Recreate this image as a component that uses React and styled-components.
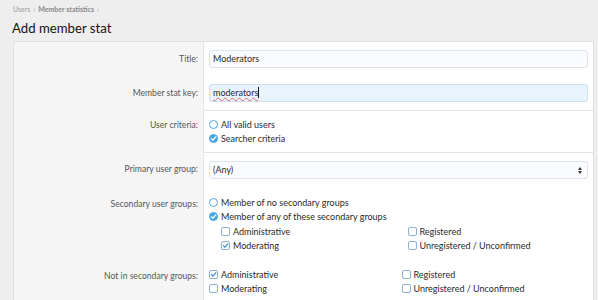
import React from 'react'
import styled, { createGlobalStyle } from 'styled-components'

const GlobalStyle = createGlobalStyle`
  html, body {
    margin: 0;
    padding: 0;
    background: #eeeeee;
    font-family: Lato, "Open Sans", sans-serif;
    color: #2a2a2a;
  }
`

const Page = styled.div`
  width: 598px;
  height: 300px;
  overflow: hidden;
  padding: 4px 4px 0 13px;
  box-sizing: border-box;
`

const Crumbs = styled.div`
  display: flex;
  align-items: center;
  gap: 3px;
  font-size: 7px;
  color: #9a9a9a;
  height: 9px;
  b {
    font-weight: 700;
    color: #8a8a8a;
  }
`

const Title = styled.h1`
  margin: 5px 0 0 -1px;
  font-size: 13.2px;
  font-weight: 400;
  color: #141414;
  line-height: 20px;
  height: 23px;
`

const Panel = styled.div`
  border: 1px solid #e0e0e0;
  border-bottom: none;
  background: #fff;
`

const Row = styled.div`
  display: grid;
  grid-template-columns: 190px 1fr;
`

const Label = styled.div`
  background: #f5f5f5;
  border-right: 1px solid #e6e6e6;
  text-align: right;
  padding: ${({pad}) => pad || '8px'} 5px 0 0;
  font-size: 8.6px;
  color: #555;
  line-height: 18px;
`

const Control = styled.div`
  padding: ${({pad}) => pad || '8px 5px'};
  border-top: ${({sep}) => sep ? '1px solid #e4e4e4' : 'none'};
`

const Input = styled.div`
  height: 18px;
  box-sizing: border-box;
  border: 1px solid ${({focus}) => focus ? '#cfdfef' : '#dde4ec'};
  border-radius: 3px;
  background: ${({focus}) => focus ? '#e9f3fd' : '#f9fbfe'};
  font-size: 9px;
  line-height: 16px;
  padding: 0 5px 0 3px;
  display: flex;
  align-items: center;
  justify-content: space-between;
`

const Spell = styled.span`
  text-decoration: underline wavy #e06a6a;
  text-decoration-thickness: 1px;
  text-underline-offset: 1px;
`

const Caret = styled.span`
  display: inline-block;
  width: 1px;
  height: 11px;
  background: #141414;
  vertical-align: -2px;
`

const Arrows = styled.span`
  display: flex;
  flex-direction: column;
  gap: 1px;
  span {
    width: 0;
    height: 0;
    border-left: 2px solid transparent;
    border-right: 2px solid transparent;
  }
  span:first-child { border-bottom: 3px solid #333; }
  span:last-child { border-top: 3px solid #333; }
`

const List = styled.div`
  display: grid;
  grid-template-columns: ${({cols}) => cols ? '1fr 1fr' : '1fr'};
  column-gap: 6px;
  padding-left: ${({indent}) => indent || '0'};
`

const Option = styled.div`
  display: flex;
  align-items: center;
  gap: 3px;
  height: 14.5px;
  font-size: 9px;
`

const Radio = styled.span`
  width: 9px;
  height: 9px;
  box-sizing: border-box;
  border-radius: 50%;
  border: 1.5px solid #47a7eb;
  background: ${({on}) => on ? '#47a7eb' : '#fff'};
  display: flex;
  align-items: center;
  justify-content: center;
  flex: none;
`

const Box = styled.span`
  width: 9px;
  height: 9px;
  box-sizing: border-box;
  border-radius: 2px;
  border: 1px solid #8fb0cf;
  background: #fff;
  display: flex;
  align-items: center;
  justify-content: center;
  flex: none;
`

const Tick = ({color}) => (
  <svg width="7" height="7" viewBox="0 0 10 10">
    <path d="M2 5.2 L4.2 7.4 L8.3 2.6" fill="none" stroke={color} strokeWidth="1.8" strokeLinecap="round" strokeLinejoin="round"/>
  </svg>
)

const RadioItem = ({on, children}) => (
  <Option>
    <Radio on={on}>{on && <Tick color="#fff"/>}</Radio>
    {children}
  </Option>
)

const CheckItem = ({on, children}) => (
  <Option>
    <Box>{on && <Tick color="#3b8fd6"/>}</Box>
    {children}
  </Option>
)

const App = () => (
  <>
    <GlobalStyle/>
    <Page>
      <Crumbs>Users <span>›</span> <b>Member statistics</b> <span>›</span></Crumbs>
      <Title>Add member stat</Title>
      <Panel>
        <Row>
          <Label>Title:</Label>
          <Control><Input>Moderators</Input></Control>
        </Row>
        <Row>
          <Label>Member stat key:</Label>
          <Control><Input focus><span><Spell>moderators</Spell><Caret/></span></Input></Control>
        </Row>
        <Row>
          <Label pad="6px">User criteria:</Label>
          <Control sep pad="6px 5px">
            <RadioItem>All valid users</RadioItem>
            <RadioItem on>Searcher criteria</RadioItem>
          </Control>
        </Row>
        <Row>
          <Label>Primary user group:</Label>
          <Control sep>
            <Input>(Any)<Arrows><span/><span/></Arrows></Input>
          </Control>
        </Row>
        <Row>
          <Label pad="8px">Secondary user groups:</Label>
          <Control pad="8px 5px 6px">
            <RadioItem>Member of no secondary groups</RadioItem>
            <RadioItem on>Member of any of these secondary groups</RadioItem>
            <List cols indent="12px">
              <CheckItem>Administrative</CheckItem>
              <CheckItem>Registered</CheckItem>
              <CheckItem on>Moderating</CheckItem>
              <CheckItem>Unregistered / Unconfirmed</CheckItem>
            </List>
          </Control>
        </Row>
        <Row>
          <Label pad="8px">Not in secondary groups:</Label>
          <Control pad="8px 5px">
            <List cols>
              <CheckItem on>Administrative</CheckItem>
              <CheckItem>Registered</CheckItem>
              <CheckItem>Moderating</CheckItem>
              <CheckItem>Unregistered / Unconfirmed</CheckItem>
            </List>
          </Control>
        </Row>
      </Panel>
    </Page>
  </>
)

export default App
